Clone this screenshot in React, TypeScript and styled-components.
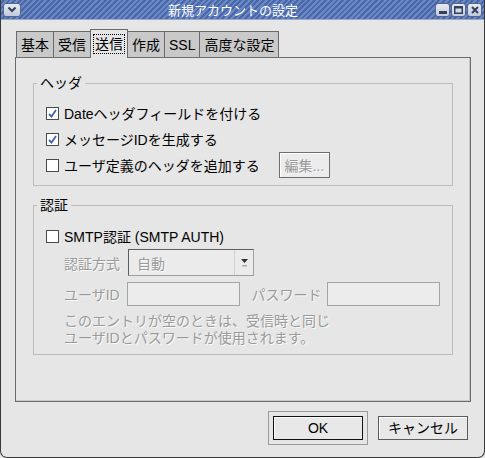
import styled, { createGlobalStyle } from 'styled-components';

const GlobalStyle = createGlobalStyle`
  html, body { margin: 0; padding: 0; background: #e6e6e6; }
  body {
    font-family: "Liberation Sans", "Noto Sans CJK JP", sans-serif;
    font-size: 14px;
    color: #000;
  }
`;

const Window = styled.div`
  width: 485px;
  height: 458px;
  box-sizing: border-box;
  border: 1px solid #3a3a3a;
  border-top: none;
  border-radius: 0 0 7px 7px;
  background: #e6e6e6;
  display: flex;
  flex-direction: column;
  overflow: hidden;
`;

const TitleBar = styled.div`
  height: 19px;
  flex-shrink: 0;
  display: flex;
  align-items: center;
  padding: 0 2px 0 2px;
  background: repeating-linear-gradient(
    -45deg,
    #4a67a8 0px,
    #4a67a8 2px,
    #6a88c6 2px,
    #6a88c6 4px
  );
  border-bottom: 1px solid #9aa9c8;
`;

const Title = styled.div`
  flex: 1;
  text-align: center;
  padding-left: 10px;
  color: #fff;
  font-size: 13px;
  line-height: 19px;
  font-family: "Noto Sans CJK JP", sans-serif;
`;

const TitleButtons = styled.div`
  display: flex;
  gap: 1px;
`;

const TitleButton = styled.div<{ $wide?: boolean }>`
  width: ${(p) => (p.$wide ? 18 : 15)}px;
  height: 14px;
  box-sizing: border-box;
  border: 1px solid #56678c;
  border-radius: 3px;
  background: linear-gradient(#e6eaf2, #c2cadc);
  display: flex;
  align-items: center;
  justify-content: center;
`;

const Body = styled.div`
  flex: 1;
  display: flex;
  flex-direction: column;
  padding: 9px 13px 0 14px;
`;

const TabBar = styled.div`
  display: flex;
  align-items: flex-end;
  height: 28px;
  padding-left: 1px;
  position: relative;
  z-index: 1;
`;

const Tab = styled.div<{ $active?: boolean }>`
  box-sizing: border-box;
  height: ${(p) => (p.$active ? 29 : 26)}px;
  margin-bottom: ${(p) => (p.$active ? -1 : 0)}px;
  margin-right: -1px;
  padding: 0 2px;
  border: 1px solid #6a6a6a;
  border-bottom: none;
  background: ${(p) => (p.$active ? '#e6e6e6' : '#c9c9c9')};
  display: flex;
  align-items: center;
  justify-content: center;
  line-height: 16px;
`;

const TabLabel = styled.span<{ $focus?: boolean }>`
  padding: 1px 1px;
  border: 1px dotted ${(p) => (p.$focus ? '#000' : 'transparent')};
`;

const Panel = styled.div`
  height: 345px;
  box-sizing: border-box;
  border: 1px solid #6b6b6b;
  box-shadow: inset -1px -1px 0 #c8c8c8;
  padding: 17px 17px 0 17px;
  display: flex;
  flex-direction: column;
`;

const Group = styled.fieldset<{ $gap?: number; $top?: number }>`
  margin: ${(p) => p.$gap ?? 0}px 0 0 0;
  border: 1px solid #bcbcbc;
  padding: ${(p) => p.$top ?? 9}px 12px 7px 12px;
  min-width: 0;
`;

const Legend = styled.legend`
  margin-left: -9px;
  padding: 0 3px;
  line-height: 16px;
`;

const CheckRow = styled.div`
  height: 26px;
  display: flex;
  align-items: center;
`;

const Box = styled.span`
  width: 13px;
  height: 13px;
  box-sizing: border-box;
  border: 1px solid #4a4a4a;
  background: #fff;
  margin-right: 5px;
  flex-shrink: 0;
  display: flex;
  align-items: center;
  justify-content: center;
`;

const EditButton = styled.div`
  margin-left: 19px;
  width: 51px;
  height: 26px;
  box-sizing: border-box;
  border: 1px solid #6e6e6e;
  box-shadow: inset 1px 1px 0 #fff;
  background: #ececec;
  display: flex;
  align-items: center;
  justify-content: center;
  color: #9a9a9a;
  text-shadow: 1px 1px 0 #fafafa;
`;

const FieldRow = styled.div<{ $top?: number; $h: number }>`
  display: flex;
  align-items: center;
  height: ${(p) => p.$h}px;
  margin-top: ${(p) => p.$top ?? 0}px;
  padding-left: 18px;
`;

const Dim = styled.span<{ $w?: number; $ml?: number }>`
  color: #9a9a9a;
  text-shadow: 1px 1px 0 #fafafa;
  ${(p) => (p.$w ? `width: ${p.$w}px;` : '')}
  ${(p) => (p.$ml ? `margin-left: ${p.$ml}px;` : '')}
  flex-shrink: 0;
`;

const Combo = styled.div`
  width: 126px;
  height: 27px;
  box-sizing: border-box;
  border: 1px solid #5e5e5e;
  border-right-color: #a0a0a0;
  border-bottom-color: #a0a0a0;
  background: #ebebeb;
  display: flex;
  align-items: center;
  margin-left: 1px;
`;

const ComboText = styled.span`
  flex: 1;
  padding-left: 8px;
  color: #9a9a9a;
  text-shadow: 1px 1px 0 #fafafa;
`;

const ComboArrow = styled.div`
  width: 19px;
  height: 100%;
  box-sizing: border-box;
  border-left: 1px solid #d0d0d0;
  display: flex;
  align-items: center;
  justify-content: center;
`;

const Input = styled.div<{ $w: number }>`
  width: ${(p) => p.$w}px;
  height: 24px;
  box-sizing: border-box;
  border: 1px solid #a4a4a4;
  background: #ececec;
`;

const Help = styled.div`
  margin-top: 7px;
  padding-left: 18px;
  line-height: 17px;
  color: #9a9a9a;
  text-shadow: 1px 1px 0 #fafafa;
`;

const ButtonRow = styled.div`
  display: flex;
  justify-content: flex-end;
  align-items: center;
  margin-top: 9px;
  padding-right: 3px;
  gap: 10px;
`;

const FocusFrame = styled.div`
  border: 1px solid #9a9a9a;
  padding: 4px;
`;

const Button = styled.div<{ $default?: boolean }>`
  width: 90px;
  height: 24px;
  box-sizing: border-box;
  border: 1px solid ${(p) => (p.$default ? '#111' : '#5c5c5c')};
  background: #e8e8e8;
  box-shadow: inset 1px 1px 0 #fff;
  display: flex;
  align-items: center;
  justify-content: center;
  line-height: 16px;
`;

const Check = () => (
  <svg width="9" height="9" viewBox="0 0 9 9">
    <polyline points="1,5 3.5,7.5 8,1" fill="none" stroke="#3f63b8" strokeWidth="1.8" />
  </svg>
);

const CheckBox = ({ checked, label }: { checked?: boolean; label: string }) => (
  <>
    <Box>{checked && <Check />}</Box>
    <span>{label}</span>
  </>
);

export default function App() {
  return (
    <>
      <GlobalStyle />
      <Window>
        <TitleBar>
          <TitleButton $wide>
            <svg width="10" height="7" viewBox="0 0 10 7">
              <polyline points="1.5,1.5 5,5 8.5,1.5" fill="none" stroke="#33415f" strokeWidth="2" />
            </svg>
          </TitleButton>
          <Title>新規アカウントの設定</Title>
          <TitleButtons>
            <TitleButton>
              <svg width="8" height="8" viewBox="0 0 8 8">
                <rect x="0" y="5" width="8" height="3" fill="#33415f" />
              </svg>
            </TitleButton>
            <TitleButton>
              <svg width="9" height="8" viewBox="0 0 9 8">
                <rect x="0.75" y="0.75" width="7.5" height="6.5" fill="none" stroke="#33415f" strokeWidth="1.5" />
                <rect x="0" y="0" width="9" height="2.5" fill="#33415f" />
              </svg>
            </TitleButton>
            <TitleButton>
              <svg width="8" height="8" viewBox="0 0 8 8">
                <path d="M1 1 L7 7 M7 1 L1 7" stroke="#33415f" strokeWidth="2" />
              </svg>
            </TitleButton>
          </TitleButtons>
        </TitleBar>
        <Body>
          <TabBar>
            <Tab><TabLabel>基本</TabLabel></Tab>
            <Tab><TabLabel>受信</TabLabel></Tab>
            <Tab $active><TabLabel $focus>送信</TabLabel></Tab>
            <Tab><TabLabel>作成</TabLabel></Tab>
            <Tab><TabLabel>SSL</TabLabel></Tab>
            <Tab><TabLabel>高度な設定</TabLabel></Tab>
          </TabBar>
          <Panel>
            <Group>
              <Legend>ヘッダ</Legend>
              <CheckRow>
                <CheckBox checked label="Dateヘッダフィールドを付ける" />
              </CheckRow>
              <CheckRow>
                <CheckBox checked label="メッセージIDを生成する" />
              </CheckRow>
              <CheckRow>
                <CheckBox label="ユーザ定義のヘッダを追加する" />
                <EditButton>編集...</EditButton>
              </CheckRow>
            </Group>
            <Group $gap={11} $top={10}>
              <Legend>認証</Legend>
              <CheckRow>
                <CheckBox label="SMTP認証 (SMTP AUTH)" />
              </CheckRow>
              <FieldRow $h={27}>
                <Dim $w={63}>認証方式</Dim>
                <Combo>
                  <ComboText>自動</ComboText>
                  <ComboArrow>
                    <svg width="7" height="9" viewBox="0 0 7 9">
                      <polygon points="0,1 7,1 3.5,5" fill="#333" />
                      <rect x="1" y="7" width="5" height="1.5" fill="#aaa" />
                    </svg>
                  </ComboArrow>
                </Combo>
              </FieldRow>
              <FieldRow $h={24} $top={6}>
                <Dim $w={63}>ユーザID</Dim>
                <Input $w={114} />
                <Dim $ml={12} $w={75}>パスワード</Dim>
                <Input $w={115} />
              </FieldRow>
              <Help>
                このエントリが空のときは、受信時と同じ
                <br />
                ユーザIDとパスワードが使用されます。
              </Help>
            </Group>
          </Panel>
          <ButtonRow>
            <FocusFrame>
              <Button $default>OK</Button>
            </FocusFrame>
            <Button>キャンセル</Button>
          </ButtonRow>
        </Body>
      </Window>
    </>
  );
}
